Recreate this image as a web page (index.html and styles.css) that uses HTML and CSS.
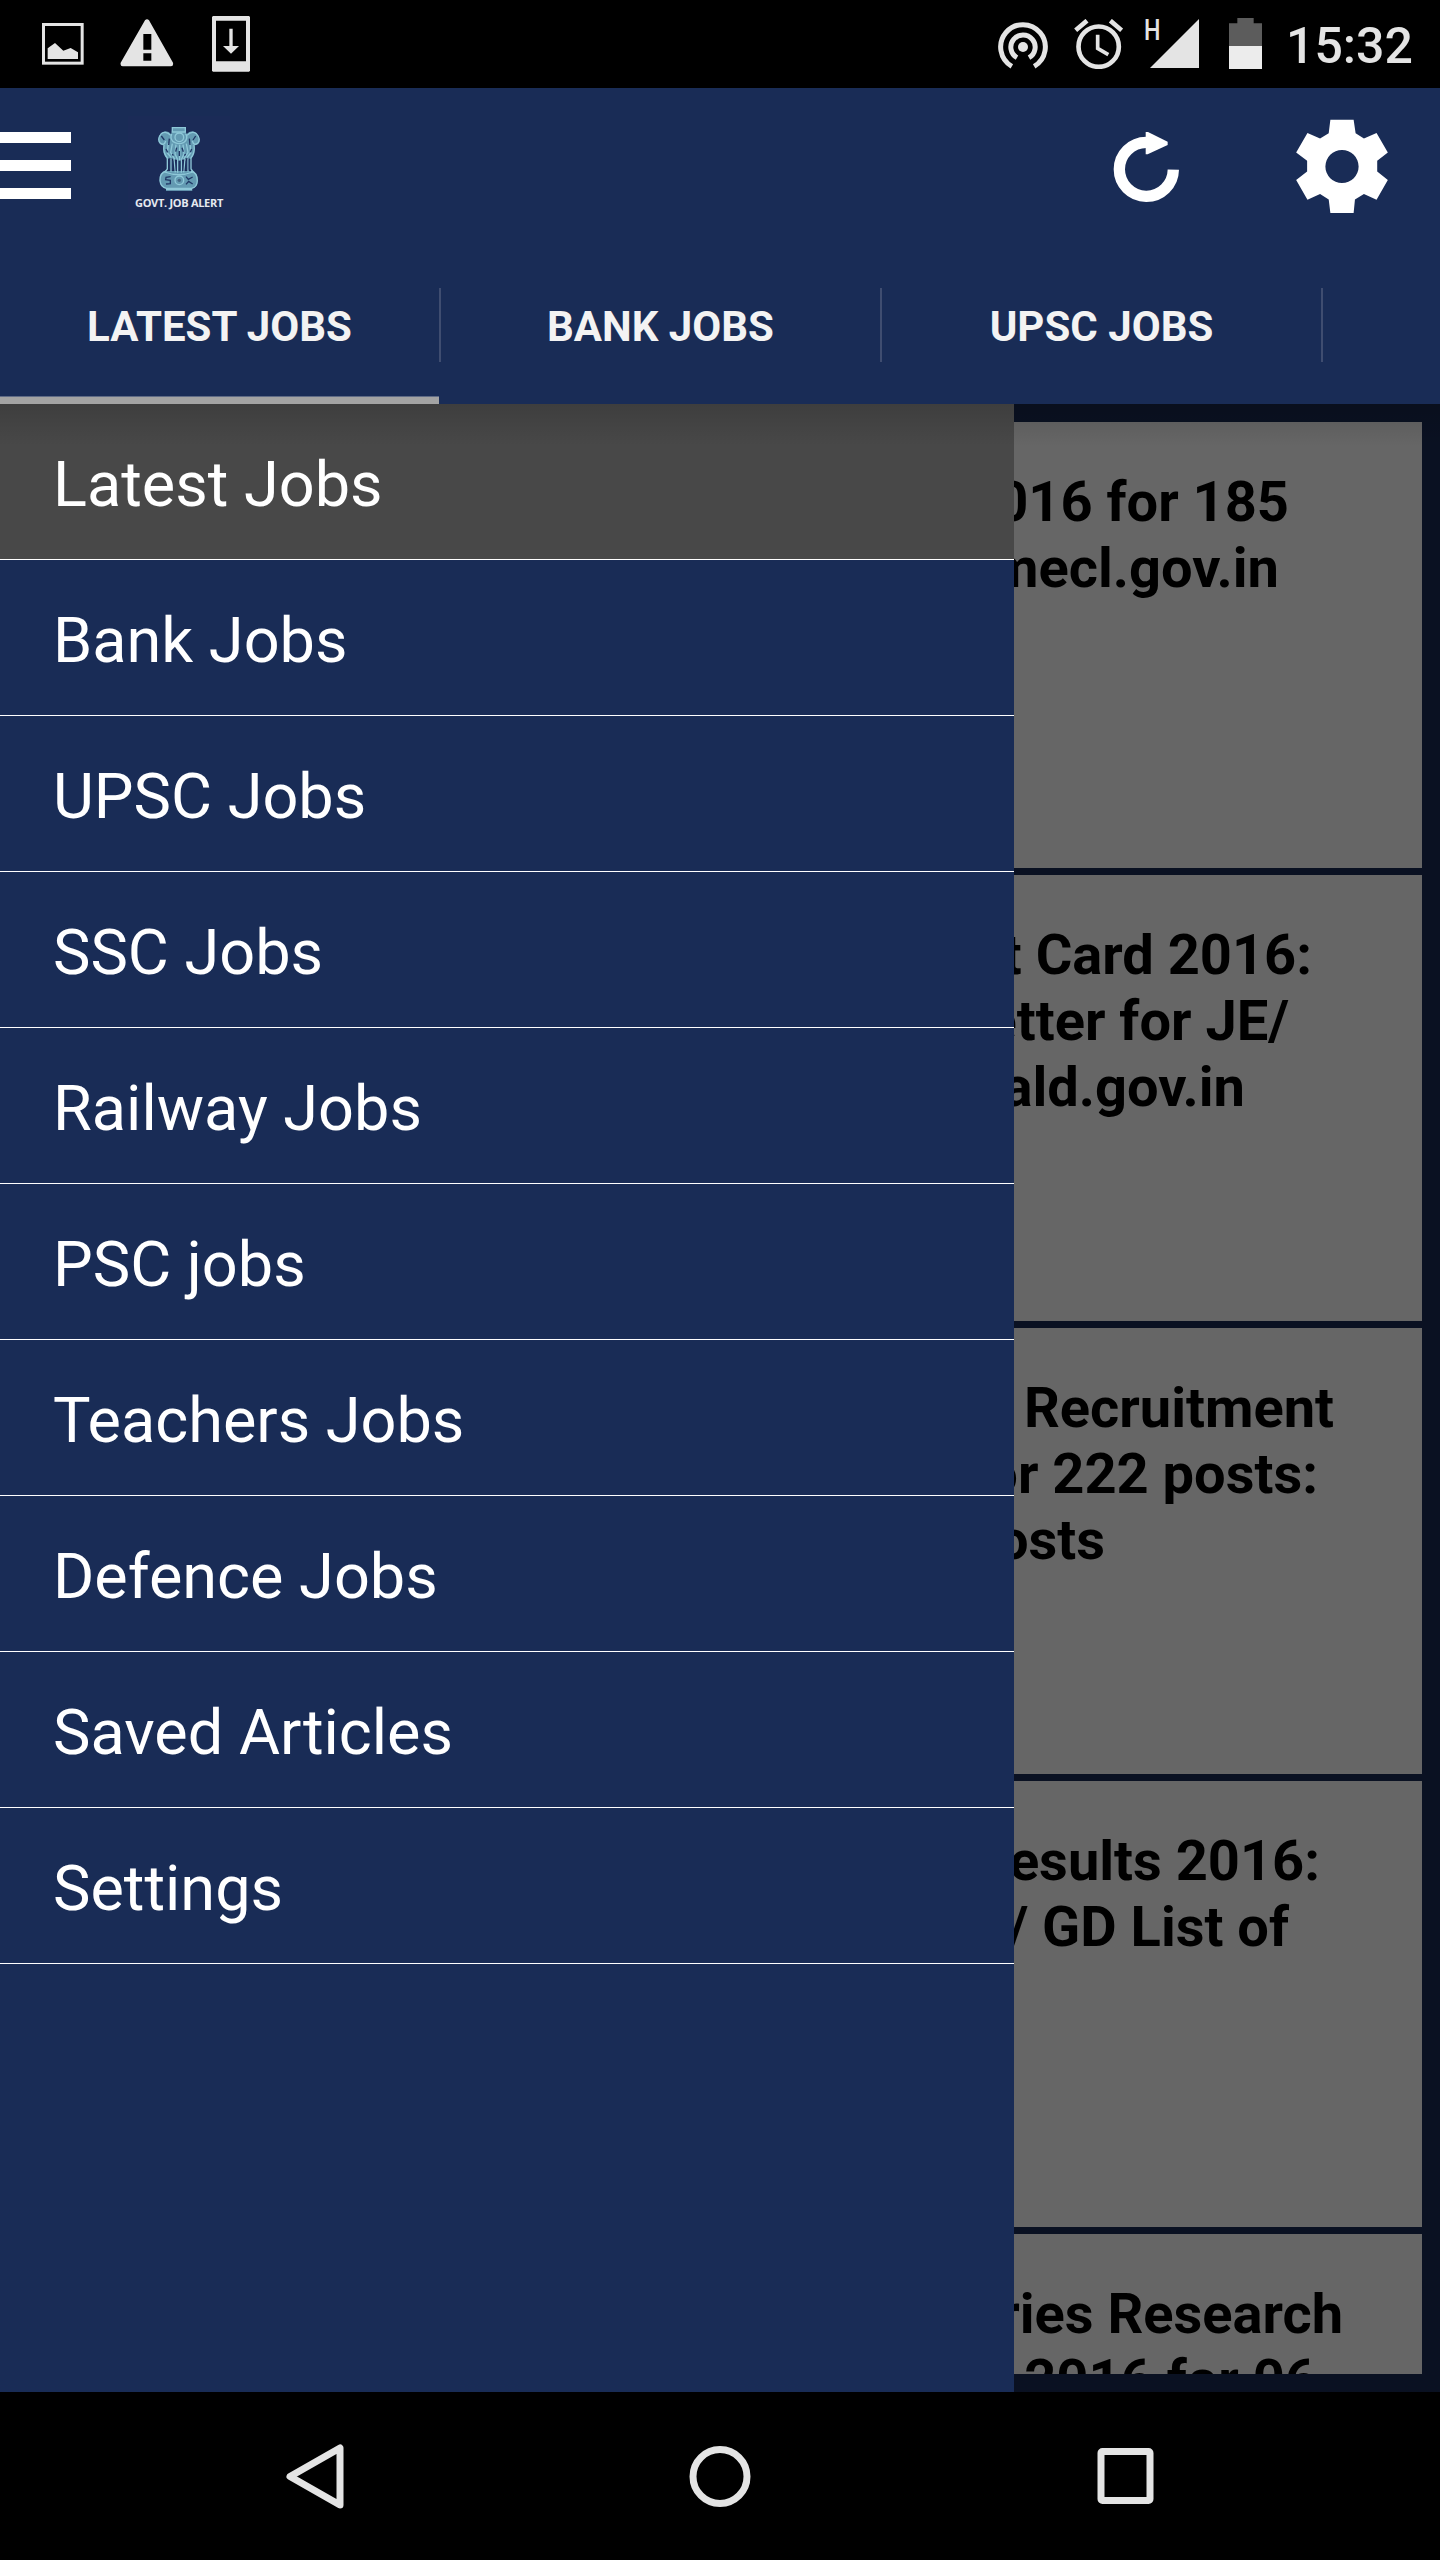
FILE: index.html
```html
<!DOCTYPE html>
<html lang="en">

<head>
    <meta charset="UTF-8">
    <meta name="viewport" content="width=device-width, initial-scale=1.0">
    <title>Govt. Job Alert</title>
    <link rel="stylesheet" href="styles.css">
</head>

<body>
    <div class="status-bar">
        <div class="status-left">
            <svg class="icon-image" viewBox="0 0 126 126">
                <rect x="4.5" y="4.5" width="116" height="116" fill="none" stroke="#e4e4e4" stroke-width="9" />
                <path d="M17 76L39 60L64 83L86 75L108 88V108H17Z" fill="#e4e4e4" />
            </svg>
            <svg class="icon-warning" viewBox="0 0 162 144">
                <path d="M75 4Q81 -2 87 4L159 131Q161 141 153 142H8Q0 141 2 131ZM70 45V92H94V45ZM70 103V125H94V103Z"
                    fill="#e4e4e4" fill-rule="evenodd" />
            </svg>
            <svg class="icon-download" viewBox="0 0 114 168">
                <path d="M3 0H111L114 3V164L111 167H3L0 164V3ZM12 14V136H102V14Z" fill="#e4e4e4" fill-rule="evenodd" />
                <path d="M52 38H62V90H81L57 113L33 90H52Z" fill="#e4e4e4" />
            </svg>
        </div>
        <div class="status-right">
            <svg class="icon-hotspot" viewBox="0 0 150 144">
                <g fill="none" stroke="#e4e4e4" stroke-width="15">
                    <path d="M41.500 133A67 67 0 1 1 108.500 133" />
                    <path d="M57 107A36.500 36.500 0 1 1 93 107" />
                </g>
                <circle cx="75" cy="75" r="15" fill="#e4e4e4" />
            </svg>
            <svg class="icon-alarm" viewBox="0 0 147 150">
                <g fill="none" stroke="#e4e4e4">
                    <circle cx="74" cy="83" r="60.500" stroke-width="14" />
                    <path d="M5 34L39 5M109 5L143 34" stroke-width="14" />
                    <path d="M71 47V88L103 107" stroke-width="11" />
                </g>
            </svg>
            <div class="network">H</div>
            <svg class="icon-signal" viewBox="0 0 147 147">
                <path d="M147 0V147H0Z" fill="#e4e4e4" />
            </svg>
            <svg class="icon-battery" viewBox="0 0 99 153">
                <path d="M25 0H74V16H99V85H0V16H25Z" fill="#5c5c5c" />
                <rect x="0" y="84" width="99" height="69" fill="#ececec" />
            </svg>
            <span class="clock">15:32</span>
        </div>
    </div>

    <div class="app-bar">
        <div class="menu-btn">
            <i></i>
            <i></i>
            <i></i>
        </div>
        <div class="logo">
            <svg class="emblem" viewBox="0 0 126 192">
                <g fill="#639ab2">
                    <path d="M43 1H82L85 22Q99 8 112 16Q130 32 123 48Q116 56 109 54Q113 78 99 96L88 93L64 101L38 93L27 96Q12 79 17 54Q8 57 3 46Q-4 29 14 16Q27 8 40 22Z" />
                    <path d="M27 132Q4 134 5 160Q6 182 24 184V191H103V184Q119 181 119 160Q119 134 98 132Z" />
                </g>
                <g fill="none" stroke="#8fc8d8" stroke-width="4">
                    <path d="M43 2H82V15H43ZM41 20Q34 39 51 47Q64 53 78 46Q92 35 83 20" />
                    <circle cx="64" cy="31" r="13" />
                    <path d="M38 25Q24 10 10 20Q-4 36 7 49Q19 57 23 42M87 25Q101 10 115 20Q130 36 119 49Q107 57 103 42" />
                    <path d="M18 54Q14 78 29 94M108 54Q112 78 98 94M31 48L28 78L40 92M43 50L38 76L50 97M54 53L51 81L59 98M65 53V100M75 53L78 81L70 98M85 50L90 76L77 97M96 48L98 78L87 92" />
                    <path d="M28 94V126L21 135M39 94V134M48 96L52 136M59 99V137M70 99V137M81 96L77 136M90 94V134M99 94V126L106 135" />
                    <path d="M25 132Q5 137 6 161Q8 181 25 184H101Q117 181 118 161Q118 137 99 132M20 135Q62 151 105 135M24 188H102" />
                    <circle cx="64" cy="160" r="13" />
                </g>
                <g fill="none" stroke="#203765" stroke-width="4">
                    <path d="M10 27L19 39M113 27L105 39M34 35L32 54M94 35L96 54M24 66L29 76M101 66L97 76M56 62L53 74M72 62L76 74M64 72V87M43 81L46 86M83 81L79 86" />
                    <path d="M34 97V128M44 101V130M55 102V132M65 103V132M74 102V132M85 101V130M94 97V128" />
                    <path d="M38 149L24 151L23 158L37 160V170L24 171M84 149L91 157L104 150M84 172L92 163L104 171" />
                </g>
                <circle cx="64" cy="160" r="5" fill="#426582" />
            </svg>
            <span class="logo-text">GOVT. JOB ALERT</span>
        </div>
        <div class="actions">
            <svg class="icon-refresh" viewBox="0 0 204 210">
                <path d="M103 31A81 81 0 1 0 184 113" fill="none" stroke="#fff" stroke-width="34" />
                <path d="M101 0H108L167 29V39L107 67H101Z" fill="#fff" />
            </svg>
            <svg class="icon-gear" viewBox="0 0 282 286">
                <path d="M106 2H176L182 43L207 59L245 42L279 101L247 126V158L279 184L245 243L207 226L180 242L176 283H106L101 242L75 226L37 243L3 184L36 158V126L3 101L37 42L75 59L101 43Z
                    M141 93A50 50 0 1 0 141 193A50 50 0 1 0 141 93Z" fill="#fff" fill-rule="evenodd" />
            </svg>
        </div>
    </div>

    <ul class="tabs">
        <li class="tab active">LATEST JOBS</li>
        <li class="tab">BANK JOBS</li>
        <li class="tab">UPSC JOBS</li>
    </ul>

    <div class="content">
        <div class="news-list">
            <div class="card">
                <p class="a1">2016 for 185</p>
                <p class="a2">mecl.gov.in</p>
            </div>
            <div class="card">
                <p class="b1">t Card 2016:</p>
                <p class="b2">etter for JE/</p>
                <p class="b3">ald.gov.in</p>
            </div>
            <div class="card">
                <p class="c1">Recruitment</p>
                <p class="c2">or 222 posts:</p>
                <p class="c3">posts</p>
            </div>
            <div class="card">
                <p class="d1">esults 2016:</p>
                <p class="d2">/ GD List of</p>
            </div>
            <div class="card">
                <p class="e1">ries Research</p>
                <p class="e2">2016 for 06</p>
            </div>
        </div>
        <ul class="drawer">
            <li class="active">Latest Jobs</li>
            <li>Bank Jobs</li>
            <li>UPSC Jobs</li>
            <li>SSC Jobs</li>
            <li>Railway Jobs</li>
            <li>PSC jobs</li>
            <li>Teachers Jobs</li>
            <li>Defence Jobs</li>
            <li>Saved Articles</li>
            <li>Settings</li>
        </ul>
        <div class="shadow"></div>
    </div>

    <div class="nav-bar">
        <svg viewBox="0 0 72 72">
            <path d="M61 8V65L11 36.500Z" fill="none" stroke="#e4e4e4" stroke-width="7" stroke-linejoin="round" />
        </svg>
        <svg viewBox="0 0 72 72">
            <circle cx="36" cy="36.500" r="27" fill="none" stroke="#e4e4e4" stroke-width="7" />
        </svg>
        <svg viewBox="0 0 72 72">
            <rect x="12" y="11.500" width="49" height="49" rx="1.500" fill="none" stroke="#e4e4e4" stroke-width="7" />
        </svg>
    </div>
</body>

</html>
```

FILE: styles.css
```css
* {
    margin: 0;
    padding: 0;
    box-sizing: border-box;
}

body {
    width: 1440px;
    height: 2560px;
    background-color: #000;
    font-family: Roboto, "Liberation Sans", sans-serif;
    overflow: hidden;
}

li {
    list-style: none;
}

svg {
    display: block;
    flex: none;
}

/* status bar */
.status-bar {
    height: 88px;
    display: flex;
    justify-content: space-between;
    color: #e4e4e4;
}

.status-left,
.status-right {
    display: flex;
    align-items: flex-start;
}

.status-left {
    padding-left: 42px;
}

.icon-image {
    width: 42px;
    height: 42px;
    margin-top: 23px;
}

.icon-warning {
    width: 54px;
    height: 48px;
    margin: 19px 0 0 36px;
}

.icon-download {
    width: 38px;
    height: 56px;
    margin: 16px 0 0 38px;
}

.status-right {
    padding-right: 30px;
}

.icon-hotspot {
    width: 50px;
    height: 48px;
    margin-top: 22px;
}

.icon-alarm {
    width: 49px;
    height: 50px;
    margin: 19px 0 0 26px;
}

.network {
    width: 16px;
    margin: 13px 0 0 21px;
    font-size: 29px;
    line-height: 34px;
    font-weight: 500;
    transform: scaleX(.8);
    transform-origin: left;
}

.icon-signal {
    width: 49px;
    height: 49px;
    margin: 19px 0 0 -10px;
}

.icon-battery {
    width: 33px;
    height: 51px;
    margin: 18px 0 0 30px;
}

.clock {
    width: 124px;
    margin-left: 24px;
    font-size: 50px;
    line-height: 92px;
    font-weight: 500;
    text-align: right;
    white-space: nowrap;
}

/* app bar */
.app-bar {
    height: 168px;
    display: flex;
    align-items: flex-start;
    background-color: #192c56;
}

.menu-btn {
    width: 71px;
    margin-top: 44px;
    display: flex;
    flex-direction: column;
    gap: 17px;
}

.menu-btn i {
    height: 11px;
    background-color: #fff;
}

.logo {
    width: 102px;
    height: 102px;
    margin: 28px 0 0 57px;
    padding-top: 11px;
    display: flex;
    flex-direction: column;
    align-items: center;
    background-color: #1b2b57;
}

.emblem {
    width: 42px;
    height: 64px;
}

.logo-text {
    margin-top: 4px;
    color: #e6e9f0;
    font-family: "Open Sans", "Noto Sans", sans-serif;
    font-size: 11px;
    line-height: 16px;
    font-weight: 700;
    letter-spacing: -.3px;
    white-space: nowrap;
}

.actions {
    margin-left: auto;
    padding-right: 11px;
    display: flex;
}

.icon-refresh {
    width: 68px;
    height: 70px;
    margin: 44px 115px 0 0;
}

.icon-gear {
    width: 94px;
    height: 95px;
    margin: 31px 40px 0 0;
}

/* tabs */
.tabs {
    height: 148px;
    display: flex;
    align-items: flex-start;
    background-color: #192c56;
}

.tab {
    width: 441px;
    height: 148px;
    padding-top: 32px;
    padding-right: 2px;
    background: linear-gradient(#3f4d70, #3f4d70) no-repeat right 32px / 2px 74px;
    color: #f3f3f3;
    font-size: 42px;
    line-height: 78px;
    font-weight: 700;
    text-align: center;
}

.tab.active::after {
    content: "";
    display: block;
    height: 8px;
    margin-top: 30px;
    background-color: #a3a3a3;
    border-top: 1px solid #5f6b86;
}

/* content */
.content {
    position: relative;
    height: 1988px;
    background-color: #0a1122;
    overflow: hidden;
}

.news-list {
    height: 1970px;
    padding: 18px 18px 0;
    display: flex;
    flex-direction: column;
    gap: 7px;
    overflow: hidden;
}

.card {
    flex: none;
    height: 446px;
    padding-top: 47px;
    background-color: #666;
    color: #000;
    font-size: 56px;
    line-height: 66px;
    font-weight: 700;
    text-align: right;
}

/* right edge of every headline line */
.a1 { padding-right: 133px; }
.a2 { padding-right: 143px; }
.b1 { padding-right: 110px; }
.b2 { padding-right: 133px; }
.b3 { padding-right: 177px; }
.c1 { padding-right: 88px; }
.c2 { padding-right: 104px; }
.c3 { padding-right: 317px; }
.d1 { padding-right: 102px; }
.d2 { padding-right: 133px; }
.e1 { padding-right: 79px; }
.e2 { padding-right: 105px; }

.drawer {
    position: absolute;
    top: 0;
    left: 0;
    width: 1014px;
    height: 1988px;
    background-color: #192c56;
}

.drawer li {
    height: 156px;
    padding-left: 53px;
    border-bottom: 1px solid #fff;
    color: #fff;
    font-size: 63px;
    line-height: 162px;
}

.drawer .active {
    background-color: #484848;
}

.shadow {
    position: absolute;
    top: 0;
    left: 0;
    width: 100%;
    height: 42px;
    background: linear-gradient(rgba(0, 0, 0, .14), rgba(0, 0, 0, 0));
}

/* navigation bar */
.nav-bar {
    height: 168px;
    display: flex;
    justify-content: center;
    align-items: center;
    gap: 333px;
}

.nav-bar svg {
    width: 72px;
    height: 72px;
}
```
